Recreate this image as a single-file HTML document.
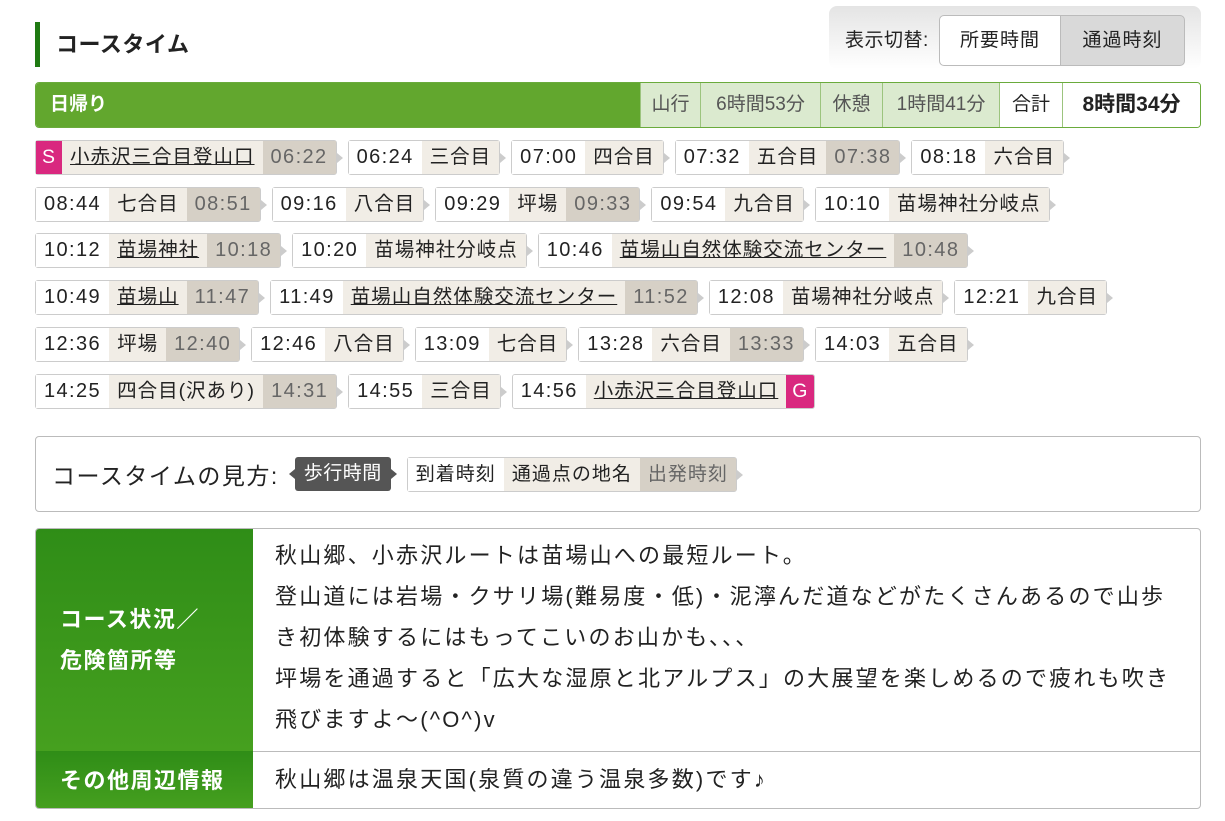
<!DOCTYPE html>
<html><head><meta charset="utf-8"><style>
*{box-sizing:border-box;margin:0;padding:0}
body{width:1225px;height:821px;background:#fff;font-family:"Liberation Sans","Noto Sans CJK JP",sans-serif;color:#222;position:relative;overflow:hidden}
.h{position:absolute;left:35px;top:22px;height:45px;border-left:5px solid #1f7a12;padding-left:16px;font-size:22px;font-weight:bold;line-height:45px;letter-spacing:0.5px}
.sw{position:absolute;left:829px;top:6px;width:372px;height:63px;border-radius:8px;background:linear-gradient(#e4e4e4,#fff)}
.sw .l{position:absolute;left:16px;top:19px;font-size:19px;letter-spacing:0.5px}
.sw .b{position:absolute;top:9px;height:51px;border:1px solid #bbb;font-size:19px;line-height:49px;text-align:center;letter-spacing:1px}
.bar{position:absolute;left:35px;top:82px;width:1166px;height:46px;border:1px solid #6aab3c;border-radius:4px;display:flex;overflow:hidden;font-size:19px;line-height:44px}
.bar .g{flex:1;background:#62a72e;color:#fff;font-weight:bold;padding-left:14px}
.bar .c{background:#dbeacf;color:#555;border-left:1px solid #9cc47e;text-align:center}
.bar .w{background:#fff;border-left:1px solid #9cc47e;text-align:center}
.row{position:absolute;left:35px;display:flex;height:35px}
.ch{display:flex;border:1px solid #ccc;border-radius:3px;height:35px;font-size:19.5px;line-height:33px;margin-right:11px;position:relative;background:#fff;letter-spacing:1px}
.ch::after{content:"";position:absolute;right:-7px;top:12px;border-left:6px solid #ccc;border-top:5px solid transparent;border-bottom:5px solid transparent}
.ch span{padding:0 8px}
.t{background:#fff;letter-spacing:1.4px;font-size:20px}
.n{background:#f1ede6}
.u{text-decoration:underline}
.d{background:#d6d0c6;color:#666;letter-spacing:1.4px;font-size:20px}
.s{background:#d9287f;color:#fff;padding:0 6px!important}
.legend{position:absolute;left:35px;top:436px;width:1166px;height:76px;border:1px solid #bbb;border-radius:4px;display:flex;align-items:center;padding-left:16px;font-size:23px;letter-spacing:1.5px}
.dk{background:#555;color:#fff;border-radius:3px;padding:0 9px;font-size:19px;line-height:34px;margin:0 16px 0 16px;position:relative;letter-spacing:0.5px}
.dk::before{content:"";position:absolute;left:-6px;top:12px;border-right:6px solid #555;border-top:5px solid transparent;border-bottom:5px solid transparent}
.dk::after{content:"";position:absolute;right:-6px;top:12px;border-left:6px solid #555;border-top:5px solid transparent;border-bottom:5px solid transparent}
.legend .ch span{font-size:19px;letter-spacing:1px}
.tb{position:absolute;left:35px;top:528px;width:1166px;height:281px;border:1px solid #bbb;border-radius:4px;overflow:hidden}
.tb .lc{position:absolute;left:0;width:217px;background:linear-gradient(#2f8d17,#46a01f);color:#fff;font-weight:bold;font-size:22px;display:flex;align-items:center;justify-content:flex-start;padding-left:24px;text-align:left;line-height:41px;letter-spacing:1.5px}
.tb .rc{position:absolute;left:217px;right:0;padding-left:22px;font-size:22px;line-height:41px;letter-spacing:2.2px;white-space:nowrap}
</style></head><body>
<div class="h">コースタイム</div>
<div class="sw"><div class="l">表示切替:</div><div class="b" style="left:110px;width:122px;background:#fff;border-radius:5px 0 0 5px">所要時間</div><div class="b" style="left:231px;width:125px;background:#d9d9d9;border-radius:0 5px 5px 0">通過時刻</div></div>
<div class="bar"><div class="g">日帰り</div><div class="c" style="width:60px">山行</div><div class="c" style="width:120px">6時間53分</div><div class="c" style="width:62px">休憩</div><div class="c" style="width:117px">1時間41分</div><div class="w" style="width:63px">合計</div><div class="w" style="width:138px;font-weight:bold;font-size:21px">8時間34分</div></div>

<div class="row" style="top:140px">
<div class="ch"><span class="s">S</span><span class="n u">小赤沢三合目登山口</span><span class="d">06:22</span></div>
<div class="ch"><span class="t">06:24</span><span class="n">三合目</span></div>
<div class="ch"><span class="t">07:00</span><span class="n">四合目</span></div>
<div class="ch"><span class="t">07:32</span><span class="n">五合目</span><span class="d">07:38</span></div>
<div class="ch"><span class="t">08:18</span><span class="n">六合目</span></div>
</div>
<div class="row" style="top:187px">
<div class="ch"><span class="t">08:44</span><span class="n">七合目</span><span class="d">08:51</span></div>
<div class="ch"><span class="t">09:16</span><span class="n">八合目</span></div>
<div class="ch"><span class="t">09:29</span><span class="n">坪場</span><span class="d">09:33</span></div>
<div class="ch"><span class="t">09:54</span><span class="n">九合目</span></div>
<div class="ch"><span class="t">10:10</span><span class="n">苗場神社分岐点</span></div>
</div>
<div class="row" style="top:233px">
<div class="ch"><span class="t">10:12</span><span class="n u">苗場神社</span><span class="d">10:18</span></div>
<div class="ch"><span class="t">10:20</span><span class="n">苗場神社分岐点</span></div>
<div class="ch"><span class="t">10:46</span><span class="n u">苗場山自然体験交流センター</span><span class="d">10:48</span></div>
</div>
<div class="row" style="top:280px">
<div class="ch"><span class="t">10:49</span><span class="n u">苗場山</span><span class="d">11:47</span></div>
<div class="ch"><span class="t">11:49</span><span class="n u">苗場山自然体験交流センター</span><span class="d">11:52</span></div>
<div class="ch"><span class="t">12:08</span><span class="n">苗場神社分岐点</span></div>
<div class="ch"><span class="t">12:21</span><span class="n">九合目</span></div>
</div>
<div class="row" style="top:327px">
<div class="ch"><span class="t">12:36</span><span class="n">坪場</span><span class="d">12:40</span></div>
<div class="ch"><span class="t">12:46</span><span class="n">八合目</span></div>
<div class="ch"><span class="t">13:09</span><span class="n">七合目</span></div>
<div class="ch"><span class="t">13:28</span><span class="n">六合目</span><span class="d">13:33</span></div>
<div class="ch"><span class="t">14:03</span><span class="n">五合目</span></div>
</div>
<div class="row" style="top:374px">
<div class="ch"><span class="t">14:25</span><span class="n">四合目(沢あり)</span><span class="d">14:31</span></div>
<div class="ch"><span class="t">14:55</span><span class="n">三合目</span></div>
<div class="ch" style="overflow:hidden"><span class="t">14:56</span><span class="n u">小赤沢三合目登山口</span><span class="s">G</span></div>
</div>

<div class="legend">コースタイムの見方:<span class="dk">歩行時間</span><div class="ch"><span class="t">到着時刻</span><span class="n">通過点の地名</span><span class="d">出発時刻</span></div></div>

<div class="tb">
<div class="lc" style="top:0;height:222px">コース状況／<br>危険箇所等</div>
<div class="rc" style="top:6px">秋山郷、小赤沢ルートは苗場山への最短ルート。<br>登山道には岩場・クサリ場(難易度・低)・泥濘んだ道などがたくさんあるので山歩<br>き初体験するにはもってこいのお山かも、、、<br>坪場を通過すると「広大な湿原と北アルプス」の大展望を楽しめるので疲れも吹き<br>飛びますよ～(^O^)v</div>
<div style="position:absolute;left:217px;right:0;top:222px;border-top:1px solid #bbb"></div>
<div class="lc" style="top:222px;height:59px">その他周辺情報</div>
<div class="rc" style="top:230px">秋山郷は温泉天国(泉質の違う温泉多数)です♪</div>
</div>
</body></html>
